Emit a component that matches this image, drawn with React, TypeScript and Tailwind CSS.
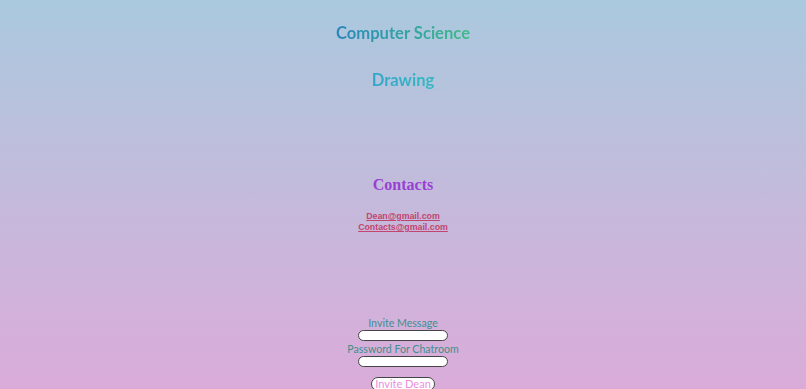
export default function App() {
  return (
    <div className="flex h-[389px] w-full flex-col items-center overflow-hidden bg-gradient-to-b from-[#a9c9de] to-[#daabd9] font-['Lato',sans-serif]">
      <h1 className="mt-[21px] bg-gradient-to-r from-[#2c86b9] to-[#40bb86] bg-clip-text text-[16.6px] leading-[24px] font-bold text-transparent">
        Computer Science
      </h1>
      <h2 className="mt-[23px] bg-gradient-to-r from-[#33a6c9] to-[#34b9c2] bg-clip-text text-[16.6px] leading-[24px] font-bold text-transparent">
        Drawing
      </h2>
      <h2 className="mt-[81px] font-['Liberation_Serif',serif] text-[16px] leading-[24px] font-bold text-[#9a3fd3]">
        Contacts
      </h2>
      <div className="mt-[14px] flex flex-col items-center font-['Liberation_Sans',sans-serif] text-[8.8px] leading-[11px] font-bold text-[#c2456f]">
        <a href="#" className="underline">Dean@gmail.com</a>
        <a href="#" className="underline">Contacts@gmail.com</a>
      </div>
      <form className="mt-[84px] flex flex-col items-center text-[10.6px] leading-[13px] text-[#3f8f8c]">
        <label>Invite Message</label>
        <input className="h-[11px] w-[90px] rounded-full border border-[#444] bg-white" />
        <label className="mt-[2px]">Password For Chatroom</label>
        <input type="password" className="h-[11px] w-[90px] rounded-full border border-[#444] bg-white" />
        <button type="button" className="mt-[10px] rounded-full border border-[#444] bg-white px-[3px] text-[11px] leading-[12px] text-[#ea8fe0]">
          Invite Dean
        </button>
      </form>
    </div>
  );
}
